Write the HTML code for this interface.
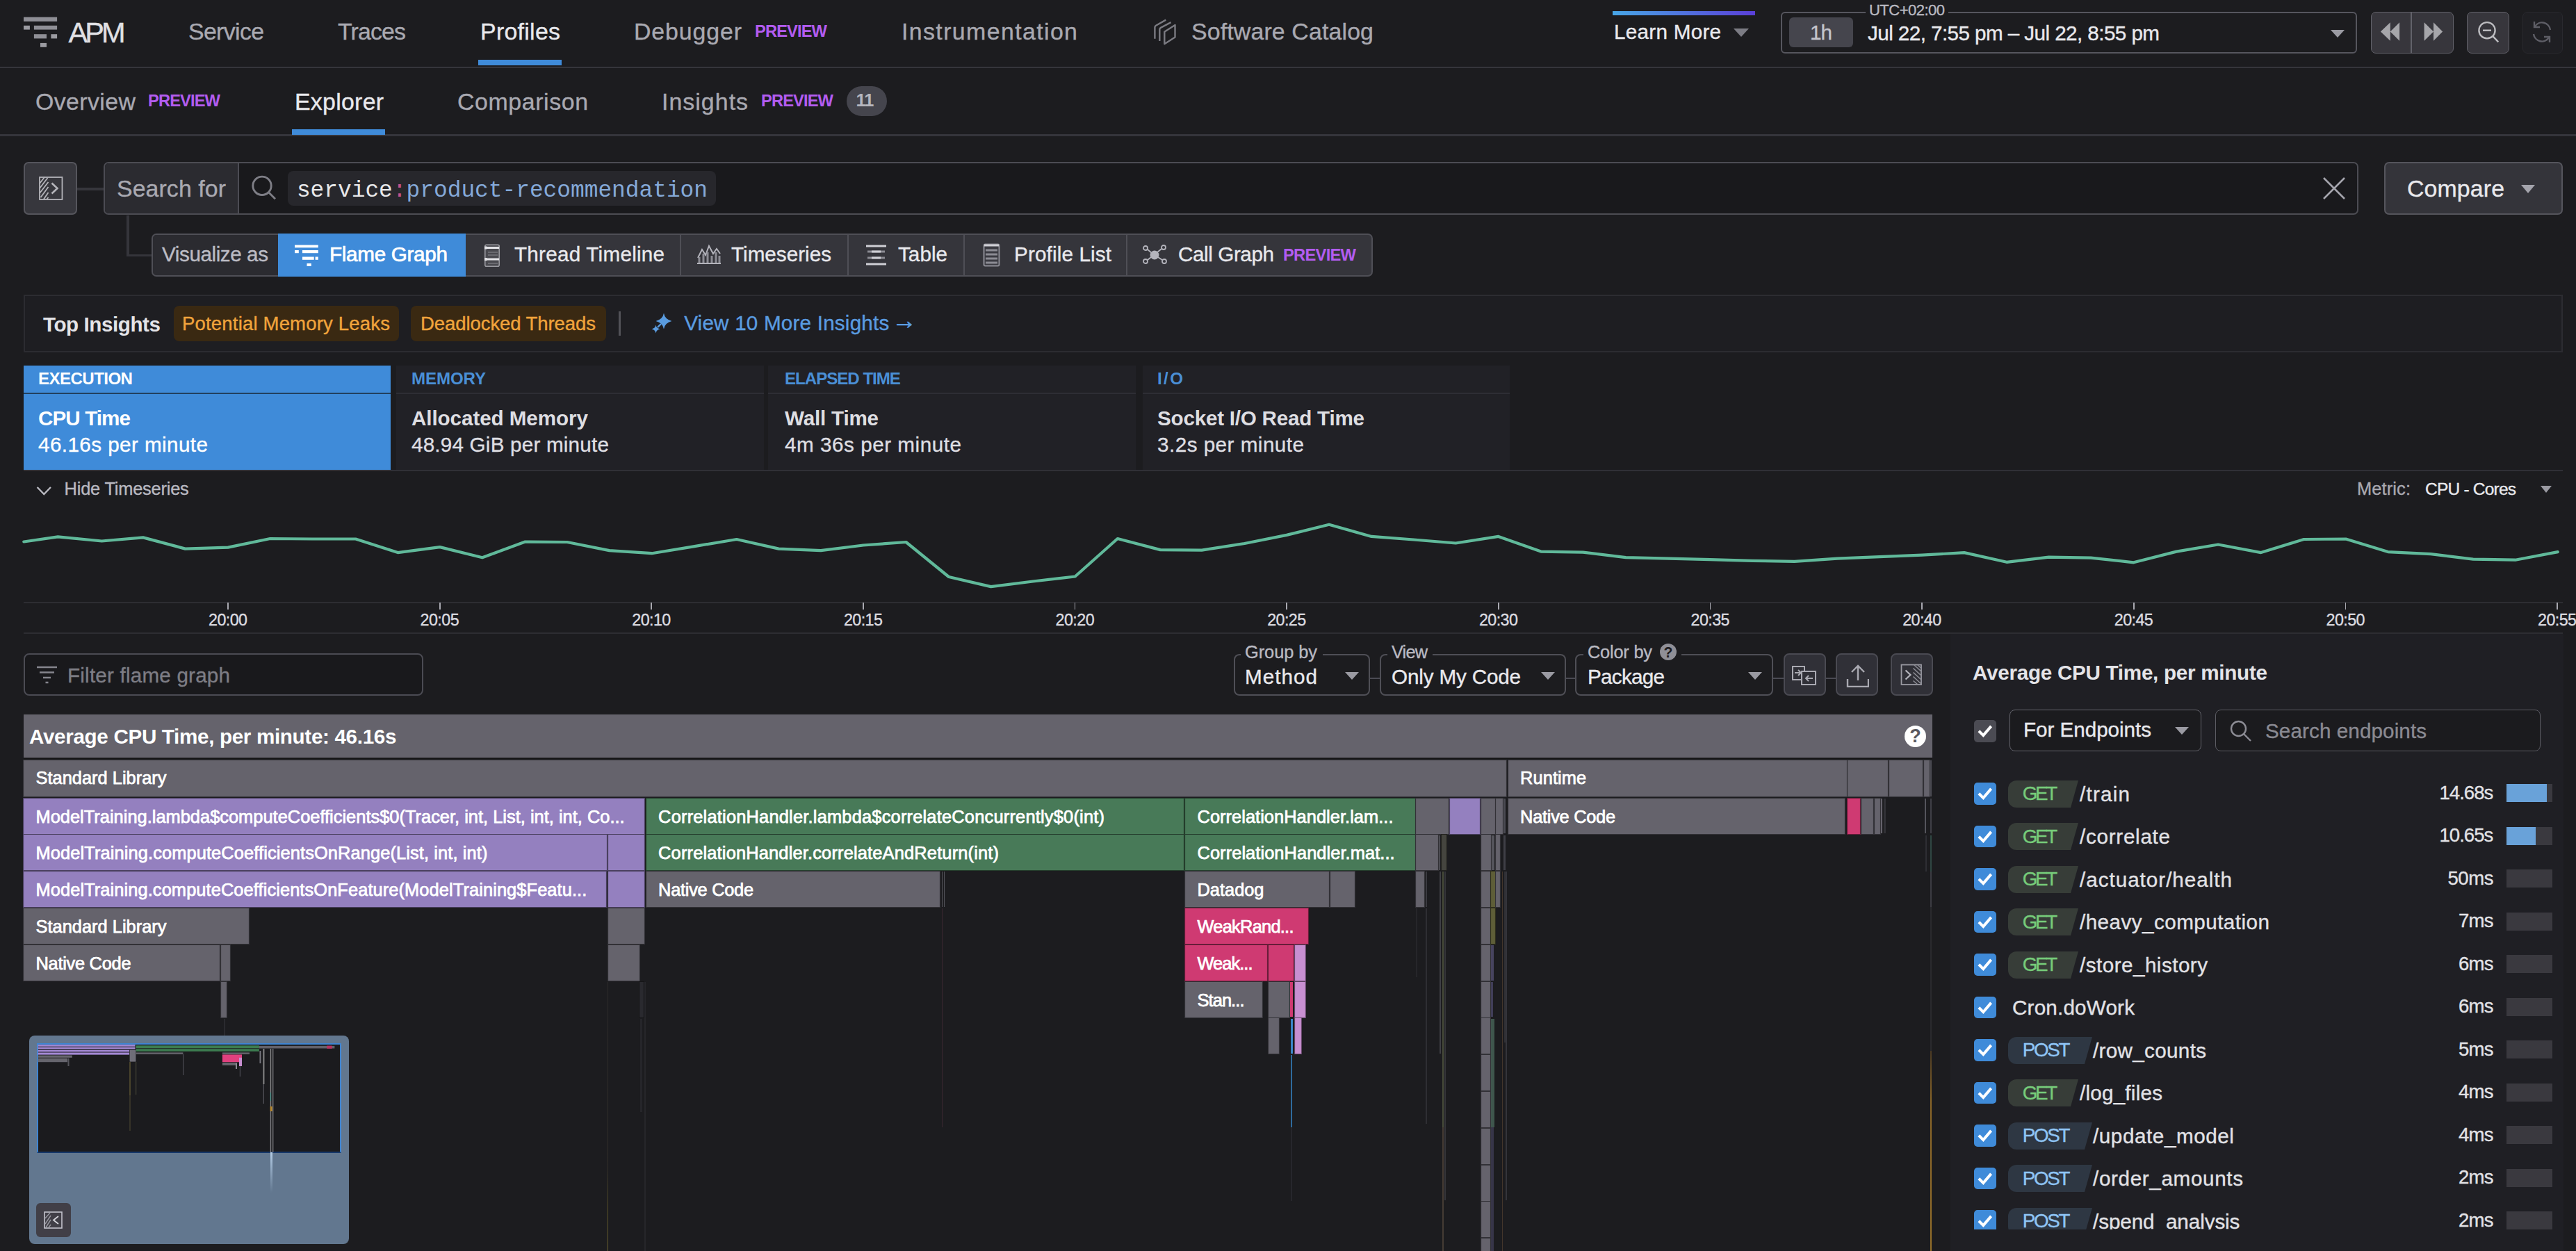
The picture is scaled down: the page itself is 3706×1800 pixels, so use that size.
<!DOCTYPE html>
<html lang="en"><head><meta charset="utf-8"><title>APM Profiles Explorer</title>
<style>
html,body{margin:0;padding:0;background:#1c1c1f;}
body{width:3706px;height:1800px;overflow:hidden;position:relative;font-family:"Liberation Sans",sans-serif;}
.a{position:absolute;}
.t{position:absolute;white-space:pre;line-height:1;}
.m{font-family:"Liberation Mono",monospace;}
.b{font-weight:700;}
</style></head><body>
<div class="a" style="left:0.0px;top:96.0px;width:3706.0px;height:2.2px;background:#35353b;"></div>
<svg class="a" style="left:33.0px;top:24.0px;" width="50.0" height="45.0" viewBox="0 0 50 45"><g fill="#8f8f96"><rect x="1" y="0.6" width="48.1" height="6.2"/><rect x="1" y="12.8" width="8.9" height="5.8" fill="#9b9ba1"/><rect x="15.9" y="12.8" width="33.2" height="5.8"/><rect x="15.9" y="25.2" width="18.1" height="6.2"/><rect x="40.4" y="25.2" width="8.7" height="6.2" fill="#9b9ba1"/><rect x="25" y="37.9" width="9" height="5.9" fill="#9b9ba1"/></g></svg>
<span class="t" style="left:98.4px;top:26.1px;font-size:41.51px;color:#e0e0e4;-webkit-text-stroke:0.35px #e0e0e4;letter-spacing:-3.82px;">APM</span>
<span class="t" style="left:271.0px;top:28.8px;font-size:33.88px;color:#a9a9b1;-webkit-text-stroke:0.35px #a9a9b1;letter-spacing:-0.66px;">Service</span>
<span class="t" style="left:486.0px;top:28.8px;font-size:33.88px;color:#a9a9b1;-webkit-text-stroke:0.35px #a9a9b1;letter-spacing:-0.86px;">Traces</span>
<span class="t" style="left:691.0px;top:28.8px;font-size:33.88px;color:#e9e9ed;-webkit-text-stroke:0.35px #e9e9ed;letter-spacing:0.29px;">Profiles</span>
<div class="a" style="left:688.0px;top:86.0px;width:120.0px;height:8.0px;background:#3f8bd9;"></div>
<span class="t" style="left:912.0px;top:28.8px;font-size:33.88px;color:#a9a9b1;-webkit-text-stroke:0.35px #a9a9b1;letter-spacing:0.89px;">Debugger</span>
<span class="t b" style="left:1086.0px;top:34.3px;font-size:23.72px;color:#b35cf0;letter-spacing:-0.90px;">PREVIEW</span>
<span class="t" style="left:1297.0px;top:28.8px;font-size:33.88px;color:#a9a9b1;-webkit-text-stroke:0.35px #a9a9b1;letter-spacing:1.39px;">Instrumentation</span>
<svg class="a" style="left:1655.0px;top:24.0px;" width="42.0" height="44.0" viewBox="0 0 42 44"><g fill="none" stroke="#7b7b82" stroke-width="2.4" stroke-linejoin="round" stroke-linecap="butt"><path d="M6.4 31.8V15.5Q6.4 13.6 8 12.7L22.3 4.6"/><path d="M13.3 34.9V18.6Q13.3 16.8 14.9 15.9L29.6 8.1"/><path d="M20.3 21.7L35.5 12V29.5L20.3 39.2Z"/></g></svg>
<span class="t" style="left:1714.0px;top:28.8px;font-size:33.88px;color:#a9a9b1;-webkit-text-stroke:0.35px #a9a9b1;letter-spacing:0.14px;">Software Catalog</span>
<div class="a" style="left:2320px;top:16px;width:205px;height:6px;background:linear-gradient(90deg,#47a6e6,#5a3fd8);"></div>
<span class="t" style="left:2322.0px;top:31.1px;font-size:29.65px;color:#e9e9ed;-webkit-text-stroke:0.35px #e9e9ed;letter-spacing:0.27px;">Learn More</span>
<div class="a" style="left:2494px;top:41px;border-left:11px solid transparent;border-right:11px solid transparent;border-top:12px solid #7c7c84;"></div>
<div class="a" style="left:2562.0px;top:17.0px;width:829.0px;height:60.0px;border:2px solid #56565e;box-sizing:border-box;border-radius:6px;"></div>
<div class="a" style="left:2684.0px;top:10.0px;width:119.0px;height:14.0px;background:#1c1c1f;"></div>
<span class="t" style="left:2689.0px;top:3.7px;font-size:22.02px;color:#b9b9c1;-webkit-text-stroke:0.35px #b9b9c1;letter-spacing:-0.53px;">UTC+02:00</span>
<div class="a" style="left:2574.0px;top:25.0px;width:92.0px;height:43.0px;background:#45454d;border-radius:6px;"></div>
<span class="t" style="left:2604.0px;top:31.6px;font-size:29.65px;color:#c4c4cc;-webkit-text-stroke:0.35px #c4c4cc;letter-spacing:-0.98px;">1h</span>
<span class="t" style="left:2687.0px;top:32.6px;font-size:29.65px;color:#e9e9ed;-webkit-text-stroke:0.35px #e9e9ed;letter-spacing:-0.57px;">Jul 22, 7:55 pm – Jul 22, 8:55 pm</span>
<div class="a" style="left:3353px;top:43px;border-left:10px solid transparent;border-right:10px solid transparent;border-top:11px solid #9a9aa2;"></div>
<div class="a" style="left:3410.5px;top:16.5px;width:119.0px;height:60.5px;background:#37363c;border:1.7px solid #62626a;box-sizing:border-box;border-radius:7px;"></div>
<div class="a" style="left:3468.4px;top:17.0px;width:1.6px;height:60.0px;background:#62626a;"></div>
<svg class="a" style="left:3424.0px;top:32.0px;" width="30.0" height="28.0" viewBox="0 0 30 28"><path d="M14.8 0.3V26.8L0.9 13.5Z M28.1 0.3V26.8L14.8 13.5Z" fill="#a6a6aa"/></svg>
<svg class="a" style="left:3487.0px;top:32.0px;" width="30.0" height="28.0" viewBox="0 0 30 28"><path d="M0.6 0.3V26.8L14 13.5Z M14 0.3V26.8L27.1 13.5Z" fill="#a6a6aa"/></svg>
<div class="a" style="left:3549.0px;top:16.5px;width:60.5px;height:60.5px;background:#37363c;border:1.7px solid #62626a;box-sizing:border-box;border-radius:7px;"></div>
<svg class="a" style="left:3563.0px;top:30.0px;" width="34.0" height="34.0" viewBox="0 0 34 34"><g fill="none" stroke="#bcbcc0" stroke-width="2.4"><circle cx="15" cy="13.7" r="11.6"/><path d="M23.4 22.1L31.2 30.3M9 13.7H21"/></g></svg>
<div class="a" style="left:3628.5px;top:16.5px;width:58.5px;height:60.5px;background:#1f1f23;border:1.7px solid #29292e;box-sizing:border-box;border-radius:7px;"></div>
<svg class="a" style="left:3641.0px;top:29.0px;" width="34.0" height="34.0" viewBox="0 0 34 34"><g fill="none" stroke="#5e5e66" stroke-width="2.4" transform="translate(33,0) scale(-1,1)"><path d="M5 14A12 12 0 0 1 27 9M29 20A12 12 0 0 1 7 25"/><path d="M28 2V10H20M6 32V24H14"/></g></svg>
<div class="a" style="left:0.0px;top:193.4px;width:3706.0px;height:2.2px;background:#35353b;"></div>
<span class="t" style="left:51.0px;top:130.0px;font-size:33.88px;color:#a9a9b1;-webkit-text-stroke:0.35px #a9a9b1;letter-spacing:0.40px;">Overview</span>
<span class="t b" style="left:213.0px;top:134.4px;font-size:23.72px;color:#b35cf0;letter-spacing:-0.90px;">PREVIEW</span>
<span class="t" style="left:424.0px;top:130.0px;font-size:33.88px;color:#e9e9ed;-webkit-text-stroke:0.35px #e9e9ed;letter-spacing:0.27px;">Explorer</span>
<div class="a" style="left:420.0px;top:186.0px;width:134.0px;height:8.0px;background:#3f8bd9;"></div>
<span class="t" style="left:658.0px;top:130.0px;font-size:33.88px;color:#a9a9b1;-webkit-text-stroke:0.35px #a9a9b1;letter-spacing:0.60px;">Comparison</span>
<span class="t" style="left:952.0px;top:130.0px;font-size:33.88px;color:#a9a9b1;-webkit-text-stroke:0.35px #a9a9b1;letter-spacing:1.04px;">Insights</span>
<span class="t b" style="left:1095.0px;top:134.4px;font-size:23.72px;color:#b35cf0;letter-spacing:-0.90px;">PREVIEW</span>
<div class="a" style="left:1218.0px;top:124.0px;width:58.0px;height:43.0px;background:#45454d;border-radius:22px;"></div>
<span class="t b" style="left:1231.5px;top:132.2px;font-size:25.41px;color:#b6b6be;letter-spacing:-0.86px;">11</span>
<div class="a" style="left:34.0px;top:232.5px;width:77.3px;height:76.8px;background:#37373d;border:2px solid #55555c;box-sizing:border-box;border-radius:7px;"></div>
<svg class="a" style="left:55.0px;top:253.0px;" width="37.0" height="36.0" viewBox="0 0 37 36"><rect x="2" y="2" width="32.5" height="32" fill="none" stroke="#b4b4ba" stroke-width="1.8"/><path d="M2 11L9 2M2 18L13.5 3M2 25L14.5 9M3.5 31L14.5 16M8 33.5L14.5 24M12.5 33.5L14.5 31" stroke="#b4b4ba" stroke-width="1.8" fill="none"/><path d="M19.5 10.5L27.5 18L19.5 25.5" stroke="#b4b4ba" stroke-width="2.6" fill="none"/></svg>
<div class="a" style="left:111.0px;top:270.3px;width:38.0px;height:3.7px;background:#36363c;"></div>
<div class="a" style="left:149.0px;top:232.5px;width:3244.0px;height:76.8px;background:#19191c;border:2px solid #4c4c53;box-sizing:border-box;border-radius:7px;"></div>
<div class="a" style="left:151.0px;top:234.5px;width:192.0px;height:72.8px;background:#2b2b30;border-radius:5px 0 0 5px;"></div>
<div class="a" style="left:342.0px;top:234.5px;width:2.2px;height:72.8px;background:#4c4c53;"></div>
<span class="t" style="left:168.0px;top:255.0px;font-size:33.88px;color:#a9a9b1;-webkit-text-stroke:0.35px #a9a9b1;letter-spacing:0.08px;">Search for</span>
<svg class="a" style="left:360.0px;top:250.0px;" width="40.0" height="40.0" viewBox="0 0 40 40"><g fill="none" stroke="#7e7e86" stroke-width="2.9"><circle cx="17" cy="17.3" r="13.2"/><path d="M26.5 26.8L36 36.2"/></g></svg>
<div class="a" style="left:414.0px;top:246.0px;width:615.7px;height:50.0px;background:#27272c;border-radius:8px;"></div>
<span class="t m" style="left:426.9px;top:259.4px;font-size:32.85px;color:#e8e8ea;">service</span>
<span class="t m" style="left:564.9px;top:259.4px;font-size:32.85px;color:#c2528c;">:</span>
<span class="t m" style="left:584.6px;top:259.4px;font-size:32.85px;color:#85a9d8;">product-recommendation</span>
<svg class="a" style="left:3340.0px;top:253.0px;" width="36.0" height="36.0" viewBox="0 0 36 36"><path d="M3 3L33 33M33 3L3 33" stroke="#a4a4ac" stroke-width="2.6" fill="none"/></svg>
<div class="a" style="left:3430.0px;top:232.5px;width:257.0px;height:76.8px;background:#34343a;border:2px solid #55555c;box-sizing:border-box;border-radius:7px;"></div>
<span class="t" style="left:3463.0px;top:255.0px;font-size:33.88px;color:#e9e9ed;-webkit-text-stroke:0.35px #e9e9ed;letter-spacing:0.11px;">Compare</span>
<div class="a" style="left:3627px;top:266px;border-left:10.5px solid transparent;border-right:10.5px solid transparent;border-top:12px solid #a4a4ac;"></div>
<div class="a" style="left:182.4px;top:310.0px;width:3.2px;height:59.3px;background:#35353b;"></div>
<div class="a" style="left:182.4px;top:366.2px;width:35.6px;height:3.1px;background:#35353b;"></div>
<div class="a" style="left:218.0px;top:336.0px;width:1757.0px;height:61.5px;background:#35353b;border:2px solid #4f4f56;box-sizing:border-box;border-radius:7px;"></div>
<div class="a" style="left:220.0px;top:338.0px;width:180.0px;height:57.5px;background:#2b2b30;border-radius:5px 0 0 5px;"></div>
<span class="t" style="left:233.0px;top:350.5px;font-size:29.65px;color:#bcbcc4;-webkit-text-stroke:0.35px #bcbcc4;letter-spacing:-0.42px;">Visualize as</span>
<div class="a" style="left:400.0px;top:336.0px;width:269.7px;height:61.5px;background:#3f8bd9;"></div>
<svg class="a" style="left:423.0px;top:351.0px;" width="36.0" height="34.0" viewBox="0 0 36 34"><g fill="#fff"><rect x="1" y="1.5" width="33.8" height="3.8"/><rect x="1" y="9" width="5.8" height="4.2"/><rect x="12" y="9" width="22.8" height="4.2"/><rect x="12" y="18.5" width="16.7" height="4.3"/><rect x="30.6" y="18.5" width="4.2" height="4.3"/><rect x="18.5" y="28" width="6.3" height="4"/></g></svg>
<span class="t" style="left:474.0px;top:350.7px;font-size:29.65px;color:#ffffff;-webkit-text-stroke:0.7px #ffffff;letter-spacing:-0.31px;">Flame Graph</span>
<div class="a" style="left:978.0px;top:338.0px;width:2.0px;height:57.5px;background:#4f4f56;"></div>
<div class="a" style="left:1219.0px;top:338.0px;width:2.0px;height:57.5px;background:#4f4f56;"></div>
<div class="a" style="left:1386.0px;top:338.0px;width:2.0px;height:57.5px;background:#4f4f56;"></div>
<div class="a" style="left:1620.0px;top:338.0px;width:2.0px;height:57.5px;background:#4f4f56;"></div>
<svg class="a" style="left:696.0px;top:350.0px;" width="25.0" height="36.0" viewBox="0 0 25 36"><rect x="1.8" y="2.2" width="20.4" height="31" rx="2" fill="#4a4a50" stroke="#9a9aa0" stroke-width="1.6"/><path d="M4 6.5H22M4 23H22" stroke="#e4e4e8" stroke-width="3.2"/><rect x="1" y="4.5" width="3.5" height="4" fill="#e4e4e8"/><rect x="1" y="21" width="3.5" height="4" fill="#e4e4e8"/><path d="M6 13H20M6 17H20M6 29H20" stroke="#6a6a70" stroke-width="2.2"/></svg>
<span class="t" style="left:740.0px;top:350.5px;font-size:29.65px;color:#e9e9ed;-webkit-text-stroke:0.35px #e9e9ed;letter-spacing:0.25px;">Thread Timeline</span>
<svg class="a" style="left:1002.0px;top:351.0px;" width="36.0" height="30.0" viewBox="0 0 36 30"><g fill="none" stroke="#b4b4bc" stroke-width="2"><path d="M1 28H35"/><path d="M2 20L8 8L13 16L18 3L24 14L29 7L34 14"/><path d="M4 27V19M10 27V14M16 27V12M22 27V17M28 27V12M33 27V17" stroke="#8c8c94" stroke-width="3"/></g></svg>
<span class="t" style="left:1052.0px;top:350.5px;font-size:29.65px;color:#e9e9ed;-webkit-text-stroke:0.35px #e9e9ed;letter-spacing:0.02px;">Timeseries</span>
<svg class="a" style="left:1246.0px;top:352.0px;" width="30.0" height="30.0" viewBox="0 0 30 30"><g stroke="#cfcfd5" stroke-width="3" fill="none"><path d="M0 2H29M0 28H29"/><path d="M2 10H27M2 19H27" stroke="#8c8c94"/><path d="M8 10H21M8 19H21"/></g></svg>
<span class="t" style="left:1292.0px;top:350.5px;font-size:29.65px;color:#e9e9ed;-webkit-text-stroke:0.35px #e9e9ed;letter-spacing:0.04px;">Table</span>
<svg class="a" style="left:1414.0px;top:350.0px;" width="26.0" height="34.0" viewBox="0 0 26 34"><rect x="1.5" y="1.5" width="22" height="31" rx="2" fill="#3b3b42" stroke="#8c8c94" stroke-width="2"/><path d="M2 3H23" stroke="#cfcfd5" stroke-width="3"/><path d="M4 10H21M4 16H21M4 22H21M4 28H21" stroke="#8c8c94" stroke-width="3"/></svg>
<span class="t" style="left:1459.0px;top:350.5px;font-size:29.65px;color:#e9e9ed;-webkit-text-stroke:0.35px #e9e9ed;letter-spacing:0.15px;">Profile List</span>
<svg class="a" style="left:1644.0px;top:352.0px;" width="36.0" height="30.0" viewBox="0 0 36 30"><g fill="none" stroke="#b4b4bc" stroke-width="1.8"><circle cx="17" cy="15" r="5.5" fill="#b4b4bc"/><circle cx="4" cy="5" r="3"/><circle cx="30" cy="4" r="3"/><circle cx="4" cy="24" r="3"/><circle cx="31" cy="24" r="3"/><path d="M7 7L13 12M27 6L21 11M7 22L12 18M28 22L22 18"/></g></svg>
<span class="t" style="left:1695.0px;top:350.5px;font-size:29.65px;color:#e9e9ed;-webkit-text-stroke:0.35px #e9e9ed;letter-spacing:-0.41px;">Call Graph</span>
<span class="t b" style="left:1846.0px;top:355.7px;font-size:23.72px;color:#b35cf0;letter-spacing:-0.73px;">PREVIEW</span>
<div class="a" style="left:34.0px;top:424.0px;width:3653.0px;height:83.0px;background:#1e1e22;border:2px solid #2c2c31;box-sizing:border-box;"></div>
<span class="t b" style="left:62.0px;top:452.1px;font-size:29.65px;color:#e4e4e8;letter-spacing:-0.45px;">Top Insights</span>
<div class="a" style="left:250.0px;top:440.0px;width:324.0px;height:51.0px;background:#3a2912;border-radius:8px;"></div>
<span class="t" style="left:262.0px;top:451.7px;font-size:27.53px;color:#f0a43c;-webkit-text-stroke:0.35px #f0a43c;letter-spacing:0.18px;">Potential Memory Leaks</span>
<div class="a" style="left:591.0px;top:440.0px;width:281.0px;height:51.0px;background:#3a2912;border-radius:8px;"></div>
<span class="t" style="left:605.0px;top:451.7px;font-size:27.53px;color:#f0a43c;-webkit-text-stroke:0.35px #f0a43c;letter-spacing:-0.08px;">Deadlocked Threads</span>
<div class="a" style="left:890.3px;top:448.0px;width:2.7px;height:35.0px;background:#525258;"></div>
<svg class="a" style="left:934.0px;top:449.0px;" width="34.0" height="32.0" viewBox="0 0 34 32"><g fill="#5a9ce0"><path d="M21 1.6Q22.5 10.5 32.4 13Q22.5 15.5 21 24.4Q19.5 15.5 9.6 13Q19.5 10.5 21 1.6Z"/><path d="M9.5 18.6Q10.3 23.4 15.4 24.5Q10.3 25.6 9.5 30.4Q8.7 25.6 3.6 24.5Q8.7 23.4 9.5 18.6Z"/><path d="M12 22L17 17" stroke="#5a9ce0" stroke-width="2.4"/></g></svg>
<span class="t" style="left:984.2px;top:450.1px;font-size:29.65px;color:#5a9ce0;-webkit-text-stroke:0.35px #5a9ce0;letter-spacing:0.20px;">View 10 More Insights</span>
<span class="t" style="left:1283.5px;top:443.2px;font-size:35.00px;color:#5a9ce0;-webkit-text-stroke:0.8px #5a9ce0;">→</span>
<div class="a" style="left:34.0px;top:526.0px;width:528.0px;height:150.0px;background:#3f8bd9;"></div>
<div class="a" style="left:34.0px;top:565.2px;width:528.0px;height:2.2px;background:#22405f;"></div>
<span class="t b" style="left:55.0px;top:532.9px;font-size:24.14px;color:#ffffff;letter-spacing:-0.59px;">EXECUTION</span>
<span class="t b" style="left:55.0px;top:587.1px;font-size:29.65px;color:#ffffff;letter-spacing:-0.92px;">CPU Time</span>
<span class="t" style="left:55.0px;top:625.1px;font-size:29.65px;color:#ffffff;-webkit-text-stroke:0.35px #ffffff;letter-spacing:0.42px;">46.16s per minute</span>
<div class="a" style="left:570.0px;top:526.0px;width:529.0px;height:150.0px;background:#212126;"></div>
<div class="a" style="left:570.0px;top:565.2px;width:529.0px;height:2.0px;background:#2e2e34;"></div>
<span class="t b" style="left:592.0px;top:532.9px;font-size:24.14px;color:#4a8fd6;letter-spacing:-0.13px;">MEMORY</span>
<span class="t b" style="left:592.0px;top:587.1px;font-size:29.65px;color:#dedee2;letter-spacing:-0.09px;">Allocated Memory</span>
<span class="t" style="left:592.0px;top:625.1px;font-size:29.65px;color:#dedee2;-webkit-text-stroke:0.35px #dedee2;letter-spacing:0.20px;">48.94 GiB per minute</span>
<div class="a" style="left:1105.0px;top:526.0px;width:529.0px;height:150.0px;background:#212126;"></div>
<div class="a" style="left:1105.0px;top:565.2px;width:529.0px;height:2.0px;background:#2e2e34;"></div>
<span class="t b" style="left:1129.0px;top:532.9px;font-size:24.14px;color:#4a8fd6;letter-spacing:-1.03px;">ELAPSED TIME</span>
<span class="t b" style="left:1129.0px;top:587.1px;font-size:29.65px;color:#dedee2;letter-spacing:-0.21px;">Wall Time</span>
<span class="t" style="left:1129.0px;top:625.1px;font-size:29.65px;color:#dedee2;-webkit-text-stroke:0.35px #dedee2;letter-spacing:0.53px;">4m 36s per minute</span>
<div class="a" style="left:1644.0px;top:526.0px;width:528.0px;height:150.0px;background:#212126;"></div>
<div class="a" style="left:1644.0px;top:565.2px;width:528.0px;height:2.0px;background:#2e2e34;"></div>
<span class="t b" style="left:1665.0px;top:532.9px;font-size:24.14px;color:#4a8fd6;letter-spacing:2.41px;">I/O</span>
<span class="t b" style="left:1665.0px;top:587.1px;font-size:29.65px;color:#dedee2;letter-spacing:-0.24px;">Socket I/O Read Time</span>
<span class="t" style="left:1665.0px;top:625.1px;font-size:29.65px;color:#dedee2;-webkit-text-stroke:0.35px #dedee2;letter-spacing:0.48px;">3.2s per minute</span>
<div class="a" style="left:34.0px;top:676.0px;width:3653.0px;height:2.0px;background:#303036;"></div>
<svg class="a" style="left:52.0px;top:697.5px;" width="23.0" height="16.0" viewBox="0 0 23 16"><path d="M1.6 3L11.3 13L21 3" fill="none" stroke="#b9b9c1" stroke-width="2.4"/></svg>
<span class="t" style="left:92.6px;top:690.8px;font-size:25.41px;color:#b9b9c1;-webkit-text-stroke:0.35px #b9b9c1;letter-spacing:-0.21px;">Hide Timeseries</span>
<span class="t" style="left:3391.0px;top:691.2px;font-size:25.41px;color:#a9a9b1;-webkit-text-stroke:0.35px #a9a9b1;letter-spacing:0.13px;">Metric:</span>
<span class="t" style="left:3489.0px;top:691.7px;font-size:24.56px;color:#e9e9ed;-webkit-text-stroke:0.35px #e9e9ed;letter-spacing:-0.81px;">CPU - Cores</span>
<div class="a" style="left:3655px;top:699px;border-left:8.5px solid transparent;border-right:8.5px solid transparent;border-top:10px solid #9a9aa2;"></div>
<svg class="a" style="left:0.0px;top:690.0px;" width="3706.0" height="200.0" viewBox="0 690 3706 200"><path d="M34.3 779.5 L83.3 772.4 L146.4 778.5 L205.9 773.4 L266.5 789.6 L328.0 787.6 L388.6 775.0 L449.1 775.5 L511.7 775.5 L572.3 795.1 L632.8 787.1 L693.9 802.2 L755.5 779.5 L816.0 780.0 L876.6 792.1 L937.7 796.2 L999.2 786.1 L1059.8 776.0 L1120.3 789.6 L1180.9 792.1 L1242.0 784.5 L1241.9 784.5 L1303.5 780.0 L1365.0 830.0 L1425.6 844.1 L1486.1 836.5 L1546.7 829.5 L1607.8 775.0 L1669.3 791.1 L1728.9 791.6 L1790.5 782.0 L1851.0 769.9 L1912.1 754.8 L1973.1 771.9 L2033.7 776.5 L2094.3 781.5 L2155.8 771.9 L2216.9 793.6 L2277.4 794.6 L2339.0 802.2 L2401.1 803.7 L2460.5 805.2 L2521.1 806.8 L2581.6 807.8 L2643.2 803.7 L2703.7 801.2 L2765.3 798.7 L2825.9 795.1 L2886.9 808.8 L2947.5 801.7 L3008.1 802.7 L3069.6 809.3 L3131.2 793.6 L3191.2 783.5 L3252.8 795.1 L3314.4 776.0 L3374.9 775.5 L3435.5 794.1 L3497.1 797.2 L3558.1 804.7 L3618.7 805.7 L3679.8 794.1" fill="none" stroke="#60b99a" stroke-width="4.2" stroke-linejoin="round" stroke-linecap="round"/></svg>
<div class="a" style="left:34.0px;top:866.0px;width:3653.0px;height:2.0px;background:#2d2d32;"></div>
<div class="a" style="left:34.0px;top:910.0px;width:3653.0px;height:2.0px;background:#2d2d32;"></div>
<div class="a" style="left:327.1px;top:867.0px;width:1.8px;height:10.0px;background:#a9a9b1;"></div>
<span class="t" style="left:300.0px;top:881.3px;font-size:23.29px;color:#dcdce0;-webkit-text-stroke:0.35px #dcdce0;letter-spacing:-0.57px;">20:00</span>
<div class="a" style="left:631.8px;top:867.0px;width:1.8px;height:10.0px;background:#a9a9b1;"></div>
<span class="t" style="left:604.6px;top:881.3px;font-size:23.29px;color:#dcdce0;-webkit-text-stroke:0.35px #dcdce0;letter-spacing:-0.57px;">20:05</span>
<div class="a" style="left:936.4px;top:867.0px;width:1.8px;height:10.0px;background:#a9a9b1;"></div>
<span class="t" style="left:909.3px;top:881.3px;font-size:23.29px;color:#dcdce0;-webkit-text-stroke:0.35px #dcdce0;letter-spacing:-0.57px;">20:10</span>
<div class="a" style="left:1241.0px;top:867.0px;width:1.8px;height:10.0px;background:#a9a9b1;"></div>
<span class="t" style="left:1213.9px;top:881.3px;font-size:23.29px;color:#dcdce0;-webkit-text-stroke:0.35px #dcdce0;letter-spacing:-0.57px;">20:15</span>
<div class="a" style="left:1545.7px;top:867.0px;width:1.8px;height:10.0px;background:#a9a9b1;"></div>
<span class="t" style="left:1518.6px;top:881.3px;font-size:23.29px;color:#dcdce0;-webkit-text-stroke:0.35px #dcdce0;letter-spacing:-0.57px;">20:20</span>
<div class="a" style="left:1850.3px;top:867.0px;width:1.8px;height:10.0px;background:#a9a9b1;"></div>
<span class="t" style="left:1823.2px;top:881.3px;font-size:23.29px;color:#dcdce0;-webkit-text-stroke:0.35px #dcdce0;letter-spacing:-0.57px;">20:25</span>
<div class="a" style="left:2155.0px;top:867.0px;width:1.8px;height:10.0px;background:#a9a9b1;"></div>
<span class="t" style="left:2127.9px;top:881.3px;font-size:23.29px;color:#dcdce0;-webkit-text-stroke:0.35px #dcdce0;letter-spacing:-0.57px;">20:30</span>
<div class="a" style="left:2459.6px;top:867.0px;width:1.8px;height:10.0px;background:#a9a9b1;"></div>
<span class="t" style="left:2432.5px;top:881.3px;font-size:23.29px;color:#dcdce0;-webkit-text-stroke:0.35px #dcdce0;letter-spacing:-0.57px;">20:35</span>
<div class="a" style="left:2764.3px;top:867.0px;width:1.8px;height:10.0px;background:#a9a9b1;"></div>
<span class="t" style="left:2737.2px;top:881.3px;font-size:23.29px;color:#dcdce0;-webkit-text-stroke:0.35px #dcdce0;letter-spacing:-0.57px;">20:40</span>
<div class="a" style="left:3068.9px;top:867.0px;width:1.8px;height:10.0px;background:#a9a9b1;"></div>
<span class="t" style="left:3041.8px;top:881.3px;font-size:23.29px;color:#dcdce0;-webkit-text-stroke:0.35px #dcdce0;letter-spacing:-0.57px;">20:45</span>
<div class="a" style="left:3373.6px;top:867.0px;width:1.8px;height:10.0px;background:#a9a9b1;"></div>
<span class="t" style="left:3346.5px;top:881.3px;font-size:23.29px;color:#dcdce0;-webkit-text-stroke:0.35px #dcdce0;letter-spacing:-0.57px;">20:50</span>
<div class="a" style="left:3678.2px;top:867.0px;width:1.8px;height:10.0px;background:#a9a9b1;"></div>
<span class="t" style="left:3651.0px;top:881.3px;font-size:23.29px;color:#dcdce0;-webkit-text-stroke:0.35px #dcdce0;letter-spacing:-0.57px;">20:55</span>
<div class="a" style="left:34.0px;top:940.0px;width:575.0px;height:61.0px;background:#19191c;border:2px solid #4b4b53;box-sizing:border-box;border-radius:8px;"></div>
<svg class="a" style="left:52.0px;top:958.0px;" width="32.0" height="26.0" viewBox="0 0 32 26"><path d="M1 2H30M5 9.5H26M10 17H21M13.5 24H17.5" stroke="#85858d" stroke-width="2.4" fill="none"/></svg>
<span class="t" style="left:97.0px;top:956.6px;font-size:29.65px;color:#7d7d85;-webkit-text-stroke:0.35px #7d7d85;letter-spacing:0.20px;">Filter flame graph</span>
<div class="a" style="left:1775.0px;top:941.3px;width:196.0px;height:60.2px;border:2px solid #4f4f56;box-sizing:border-box;border-radius:8px;"></div>
<div class="a" style="left:1785.0px;top:930.0px;width:118.0px;height:16.0px;background:#1c1c1f;"></div>
<span class="t" style="left:1791.0px;top:925.5px;font-size:25.41px;color:#b9b9c1;-webkit-text-stroke:0.35px #b9b9c1;letter-spacing:-0.07px;">Group by</span>
<span class="t" style="left:1791.0px;top:958.6px;font-size:29.65px;color:#e9e9ed;-webkit-text-stroke:0.35px #e9e9ed;letter-spacing:1.02px;">Method</span>
<div class="a" style="left:1935px;top:967px;border-left:10px solid transparent;border-right:10px solid transparent;border-top:11px solid #9a9aa2;"></div>
<div class="a" style="left:1971.0px;top:975.0px;width:14.0px;height:2.0px;background:#4b4b53;"></div>
<div class="a" style="left:1985.0px;top:941.3px;width:268.0px;height:60.2px;border:2px solid #4f4f56;box-sizing:border-box;border-radius:8px;"></div>
<div class="a" style="left:1996.0px;top:930.0px;width:65.0px;height:16.0px;background:#1c1c1f;"></div>
<span class="t" style="left:2002.0px;top:925.5px;font-size:25.41px;color:#b9b9c1;-webkit-text-stroke:0.35px #b9b9c1;letter-spacing:-0.87px;">View</span>
<span class="t" style="left:2002.0px;top:958.6px;font-size:29.65px;color:#e9e9ed;-webkit-text-stroke:0.35px #e9e9ed;letter-spacing:-0.16px;">Only My Code</span>
<div class="a" style="left:2217px;top:967px;border-left:10px solid transparent;border-right:10px solid transparent;border-top:11px solid #9a9aa2;"></div>
<div class="a" style="left:2253.0px;top:975.0px;width:13.0px;height:2.0px;background:#4b4b53;"></div>
<div class="a" style="left:2266.0px;top:941.3px;width:285.0px;height:60.2px;border:2px solid #4f4f56;box-sizing:border-box;border-radius:8px;"></div>
<div class="a" style="left:2278.0px;top:925.0px;width:141.0px;height:21.0px;background:#1c1c1f;"></div>
<span class="t" style="left:2284.0px;top:925.5px;font-size:25.41px;color:#b9b9c1;-webkit-text-stroke:0.35px #b9b9c1;letter-spacing:-0.23px;">Color by</span>
<div class="a" style="left:2388.0px;top:926.0px;width:24.0px;height:24.0px;background:#8f8f97;border-radius:12px;"></div>
<span class="t b" style="left:2393.5px;top:927.9px;font-size:21.18px;color:#1c1c1f;letter-spacing:-0.94px;">?</span>
<span class="t" style="left:2284.0px;top:958.6px;font-size:29.65px;color:#e9e9ed;-webkit-text-stroke:0.35px #e9e9ed;letter-spacing:-0.73px;">Package</span>
<div class="a" style="left:2515px;top:967px;border-left:10px solid transparent;border-right:10px solid transparent;border-top:11px solid #9a9aa2;"></div>
<div class="a" style="left:2551.0px;top:975.0px;width:15.0px;height:2.0px;background:#4b4b53;"></div>
<div class="a" style="left:2627.0px;top:975.0px;width:14.0px;height:2.0px;background:#4b4b53;"></div>
<div class="a" style="left:2566.0px;top:940.0px;width:61.0px;height:61.0px;background:#303037;border:2px solid #4a4a52;box-sizing:border-box;border-radius:8px;"></div>
<div class="a" style="left:2641.0px;top:940.0px;width:61.0px;height:61.0px;background:#303037;border:2px solid #4a4a52;box-sizing:border-box;border-radius:8px;"></div>
<div class="a" style="left:2720.0px;top:940.0px;width:61.0px;height:61.0px;background:#303037;border:2px solid #4a4a52;box-sizing:border-box;border-radius:8px;"></div>
<svg class="a" style="left:2578.0px;top:956.0px;" width="38.0" height="34.0" viewBox="0 0 38 34"><g fill="none" stroke="#a9a9b1" stroke-width="2"><rect x="1" y="3" width="17" height="19" fill="#303037"/><rect x="14" y="10" width="20" height="19" fill="#303037"/><path d="M4 12H13M9 8L13 12L9 16M30 20H20M24 16L20 20L24 24"/></g></svg>
<svg class="a" style="left:2655.0px;top:955.0px;" width="34.0" height="34.0" viewBox="0 0 34 34"><g fill="none" stroke="#a9a9b1" stroke-width="2.4"><path d="M18 24V3M9 12L18 3L27 12M3 22V33H33V22"/></g></svg>
<svg class="a" style="left:2734.0px;top:955.0px;" width="32.0" height="32.0" viewBox="0 0 32 32"><rect x="1.5" y="1.5" width="28.5" height="28.5" fill="none" stroke="#9a9aa2" stroke-width="1.8"/><path d="M20 2L30 11M18.5 6.5L30 17M18.5 12.5L30 23M18.5 18.5L30 29M18.5 24.5L25 30M25 2L30 6.5" stroke="#8c8c94" stroke-width="1.6" fill="none"/><path d="M7.5 9.5L14.5 16L7.5 22.5" stroke="#b4b4bc" stroke-width="2.2" fill="none"/></svg>
<div class="a" style="left:34.0px;top:1028.0px;width:2746.0px;height:63.6px;background:#65636c;box-shadow:inset 0 -1.8px 0 0 rgba(0,0,0,.8);"></div>
<span class="t b" style="left:42.0px;top:1044.6px;font-size:29.65px;color:#ffffff;letter-spacing:-0.34px;">Average CPU Time, per minute: 46.16s</span>
<div class="a" style="left:2740.0px;top:1044.0px;width:31.0px;height:31.0px;background:#ffffff;border-radius:16px;"></div>
<span class="t b" style="left:2747.2px;top:1046.4px;font-size:27.00px;color:#5a5960;letter-spacing:-1.50px;">?</span>
<div class="a" style="left:32.9px;top:1092.8px;width:2135.6px;height:54.6px;background:#65636c;box-shadow:inset 0 0 0 1.1px rgba(0,0,0,.5);"></div>
<span class="t" style="left:51.5px;top:1106.7px;font-size:25.41px;color:#ffffff;-webkit-text-stroke:0.75px #ffffff;letter-spacing:0.01px;">Standard Library</span>
<div class="a" style="left:2168.5px;top:1092.8px;width:489.1px;height:54.6px;background:#65636c;box-shadow:inset 0 0 0 1.1px rgba(0,0,0,.5);"></div>
<span class="t" style="left:2187.1px;top:1106.7px;font-size:25.41px;color:#ffffff;-webkit-text-stroke:0.75px #ffffff;letter-spacing:0.07px;">Runtime</span>
<div class="a" style="left:2656.9px;top:1092.8px;width:60.2px;height:54.6px;background:#65636c;box-shadow:inset 0 0 0 1.1px rgba(0,0,0,.5);"></div>
<div class="a" style="left:2716.9px;top:1092.8px;width:50.2px;height:54.6px;background:#65636c;box-shadow:inset 0 0 0 1.1px rgba(0,0,0,.5);"></div>
<div class="a" style="left:2766.9px;top:1092.8px;width:10.2px;height:54.6px;background:#65636c;box-shadow:inset 0 0 0 1.1px rgba(0,0,0,.5);"></div>
<div class="a" style="left:2777.3px;top:1093.9px;width:2.0px;height:52.4px;background:#4a4a52;"></div>
<div class="a" style="left:32.9px;top:1147.6px;width:895.5px;height:53.0px;background:#9480bf;box-shadow:inset 0 0 0 1.1px rgba(0,0,0,.5);"></div>
<span class="t" style="left:51.5px;top:1162.6px;font-size:25.41px;color:#ffffff;-webkit-text-stroke:0.75px #ffffff;letter-spacing:0.01px;">ModelTraining.lambda$computeCoefficients$0(Tracer, int, List, int, int, Co...</span>
<div class="a" style="left:928.5px;top:1147.6px;width:775.3px;height:53.0px;background:#487a58;box-shadow:inset 0 0 0 1.1px rgba(0,0,0,.5);"></div>
<span class="t" style="left:947.1px;top:1162.6px;font-size:25.41px;color:#ffffff;-webkit-text-stroke:0.75px #ffffff;letter-spacing:0.20px;">CorrelationHandler.lambda$correlateConcurrently$0(int)</span>
<div class="a" style="left:1703.9px;top:1147.6px;width:333.2px;height:53.0px;background:#487a58;box-shadow:inset 0 0 0 1.1px rgba(0,0,0,.5);"></div>
<span class="t" style="left:1722.5px;top:1162.6px;font-size:25.41px;color:#ffffff;-webkit-text-stroke:0.75px #ffffff;letter-spacing:0.04px;">CorrelationHandler.lam...</span>
<div class="a" style="left:2036.4px;top:1147.6px;width:49.1px;height:53.0px;background:#65636c;box-shadow:inset 0 0 0 1.1px rgba(0,0,0,.5);"></div>
<div class="a" style="left:2084.9px;top:1147.6px;width:45.6px;height:53.0px;background:#9480bf;box-shadow:inset 0 0 0 1.1px rgba(0,0,0,.5);"></div>
<div class="a" style="left:2129.9px;top:1147.6px;width:22.0px;height:53.0px;background:#65636c;box-shadow:inset 0 0 0 1.1px rgba(0,0,0,.5);"></div>
<div class="a" style="left:2151.2px;top:1147.6px;width:11.8px;height:53.0px;background:#65636c;box-shadow:inset 0 0 0 1.1px rgba(0,0,0,.5);"></div>
<div class="a" style="left:2162.8px;top:1148.7px;width:3.5px;height:50.8px;background:#4a4a52;"></div>
<div class="a" style="left:2168.5px;top:1147.6px;width:486.6px;height:53.0px;background:#65636c;box-shadow:inset 0 0 0 1.1px rgba(0,0,0,.5);"></div>
<span class="t" style="left:2187.1px;top:1162.6px;font-size:25.41px;color:#ffffff;-webkit-text-stroke:0.75px #ffffff;letter-spacing:-0.28px;">Native Code</span>
<div class="a" style="left:2656.9px;top:1147.6px;width:20.2px;height:53.0px;background:#cf3a72;box-shadow:inset 0 0 0 1.1px rgba(0,0,0,.5);"></div>
<div class="a" style="left:2676.9px;top:1147.6px;width:19.2px;height:53.0px;background:#65636c;box-shadow:inset 0 0 0 1.1px rgba(0,0,0,.5);"></div>
<div class="a" style="left:2695.9px;top:1147.6px;width:10.2px;height:53.0px;background:#65636c;box-shadow:inset 0 0 0 1.1px rgba(0,0,0,.5);"></div>
<div class="a" style="left:2706.3px;top:1148.7px;width:1.7px;height:50.8px;background:#65636c;"></div>
<div class="a" style="left:2710.0px;top:1148.7px;width:3.0px;height:50.8px;background:#303035;"></div>
<div class="a" style="left:2769.0px;top:1148.7px;width:2.0px;height:50.8px;background:#55555c;"></div>
<div class="a" style="left:2777.3px;top:1148.7px;width:2.0px;height:50.8px;background:#3f3f46;"></div>
<div class="a" style="left:32.9px;top:1200.4px;width:841.2px;height:53.0px;background:#9480bf;box-shadow:inset 0 0 0 1.1px rgba(0,0,0,.5);"></div>
<span class="t" style="left:51.5px;top:1215.4px;font-size:25.41px;color:#ffffff;-webkit-text-stroke:0.75px #ffffff;letter-spacing:0.11px;">ModelTraining.computeCoefficientsOnRange(List, int, int)</span>
<div class="a" style="left:874.1px;top:1200.4px;width:54.3px;height:53.0px;background:#9480bf;box-shadow:inset 0 0 0 1.1px rgba(0,0,0,.5);"></div>
<div class="a" style="left:928.5px;top:1200.4px;width:775.3px;height:53.0px;background:#487a58;box-shadow:inset 0 0 0 1.1px rgba(0,0,0,.5);"></div>
<span class="t" style="left:947.1px;top:1215.4px;font-size:25.41px;color:#ffffff;-webkit-text-stroke:0.75px #ffffff;letter-spacing:0.17px;">CorrelationHandler.correlateAndReturn(int)</span>
<div class="a" style="left:1703.9px;top:1200.4px;width:333.2px;height:53.0px;background:#487a58;box-shadow:inset 0 0 0 1.1px rgba(0,0,0,.5);"></div>
<span class="t" style="left:1722.5px;top:1215.4px;font-size:25.41px;color:#ffffff;-webkit-text-stroke:0.75px #ffffff;letter-spacing:0.07px;">CorrelationHandler.mat...</span>
<div class="a" style="left:2036.4px;top:1200.4px;width:33.3px;height:53.0px;background:#65636c;box-shadow:inset 0 0 0 1.1px rgba(0,0,0,.5);"></div>
<div class="a" style="left:2069.6px;top:1201.5px;width:2.9px;height:50.8px;background:#4b4b50;"></div>
<div class="a" style="left:2072.9px;top:1200.4px;width:8.7px;height:53.0px;background:#45453f;box-shadow:inset 0 0 0 1.1px rgba(0,0,0,.5);"></div>
<div class="a" style="left:2129.9px;top:1200.4px;width:16.2px;height:53.0px;background:#65636c;box-shadow:inset 0 0 0 1.1px rgba(0,0,0,.5);"></div>
<div class="a" style="left:2146.3px;top:1201.5px;width:4.2px;height:50.8px;background:#55555c;"></div>
<div class="a" style="left:2151.2px;top:1200.4px;width:8.1px;height:53.0px;background:#65636c;box-shadow:inset 0 0 0 1.1px rgba(0,0,0,.5);"></div>
<div class="a" style="left:2162.8px;top:1201.5px;width:3.5px;height:50.8px;background:#3f3f46;"></div>
<div class="a" style="left:32.9px;top:1253.2px;width:840.0px;height:53.0px;background:#9480bf;box-shadow:inset 0 0 0 1.1px rgba(0,0,0,.5);"></div>
<span class="t" style="left:51.5px;top:1268.2px;font-size:25.41px;color:#ffffff;-webkit-text-stroke:0.75px #ffffff;letter-spacing:0.09px;">ModelTraining.computeCoefficientsOnFeature(ModelTraining$Featu...</span>
<div class="a" style="left:873.7px;top:1253.2px;width:54.7px;height:53.0px;background:#9480bf;box-shadow:inset 0 0 0 1.1px rgba(0,0,0,.5);"></div>
<div class="a" style="left:928.5px;top:1253.2px;width:424.9px;height:53.0px;background:#65636c;box-shadow:inset 0 0 0 1.1px rgba(0,0,0,.5);"></div>
<span class="t" style="left:947.1px;top:1268.2px;font-size:25.41px;color:#ffffff;-webkit-text-stroke:0.75px #ffffff;letter-spacing:-0.28px;">Native Code</span>
<div class="a" style="left:1354.5px;top:1254.3px;width:1.5px;height:50.8px;background:#55555c;"></div>
<div class="a" style="left:1357.7px;top:1254.3px;width:1.0px;height:50.8px;background:#55555c;"></div>
<div class="a" style="left:1703.9px;top:1253.2px;width:209.0px;height:53.0px;background:#65636c;box-shadow:inset 0 0 0 1.1px rgba(0,0,0,.5);"></div>
<span class="t" style="left:1722.5px;top:1268.2px;font-size:25.41px;color:#ffffff;-webkit-text-stroke:0.75px #ffffff;letter-spacing:-0.01px;">Datadog</span>
<div class="a" style="left:1912.9px;top:1253.2px;width:36.9px;height:53.0px;background:#65636c;box-shadow:inset 0 0 0 1.1px rgba(0,0,0,.5);"></div>
<div class="a" style="left:2036.4px;top:1253.2px;width:14.1px;height:53.0px;background:#65636c;box-shadow:inset 0 0 0 1.1px rgba(0,0,0,.5);"></div>
<div class="a" style="left:2050.5px;top:1254.3px;width:2.2px;height:50.8px;background:#3a3a40;"></div>
<div class="a" style="left:2129.9px;top:1253.2px;width:15.4px;height:53.0px;background:#65636c;box-shadow:inset 0 0 0 1.1px rgba(0,0,0,.5);"></div>
<div class="a" style="left:2143.9px;top:1253.2px;width:8.8px;height:53.0px;background:#5e5e38;box-shadow:inset 0 0 0 1.1px rgba(0,0,0,.5);"></div>
<div class="a" style="left:2151.2px;top:1253.2px;width:7.4px;height:53.0px;background:#65636c;box-shadow:inset 0 0 0 1.1px rgba(0,0,0,.5);"></div>
<div class="a" style="left:32.9px;top:1306.0px;width:325.9px;height:53.0px;background:#65636c;box-shadow:inset 0 0 0 1.1px rgba(0,0,0,.5);"></div>
<span class="t" style="left:51.5px;top:1321.0px;font-size:25.41px;color:#ffffff;-webkit-text-stroke:0.75px #ffffff;letter-spacing:0.01px;">Standard Library</span>
<div class="a" style="left:874.1px;top:1306.0px;width:54.3px;height:53.0px;background:#65636c;box-shadow:inset 0 0 0 1.1px rgba(0,0,0,.5);"></div>
<div class="a" style="left:1703.9px;top:1306.0px;width:178.8px;height:53.0px;background:#cf3a72;box-shadow:inset 0 0 0 1.1px rgba(0,0,0,.5);"></div>
<span class="t" style="left:1722.5px;top:1321.0px;font-size:25.41px;color:#ffffff;-webkit-text-stroke:0.75px #ffffff;letter-spacing:-0.74px;">WeakRand...</span>
<div class="a" style="left:2129.9px;top:1306.0px;width:15.4px;height:53.0px;background:#65636c;box-shadow:inset 0 0 0 1.1px rgba(0,0,0,.5);"></div>
<div class="a" style="left:2143.9px;top:1306.0px;width:7.7px;height:53.0px;background:#5e5e38;box-shadow:inset 0 0 0 1.1px rgba(0,0,0,.5);"></div>
<div class="a" style="left:32.9px;top:1358.8px;width:283.9px;height:53.0px;background:#65636c;box-shadow:inset 0 0 0 1.1px rgba(0,0,0,.5);"></div>
<span class="t" style="left:51.5px;top:1373.8px;font-size:25.41px;color:#ffffff;-webkit-text-stroke:0.75px #ffffff;letter-spacing:-0.28px;">Native Code</span>
<div class="a" style="left:316.9px;top:1358.8px;width:15.0px;height:53.0px;background:#65636c;box-shadow:inset 0 0 0 1.1px rgba(0,0,0,.5);"></div>
<div class="a" style="left:874.1px;top:1358.8px;width:47.0px;height:53.0px;background:#65636c;box-shadow:inset 0 0 0 1.1px rgba(0,0,0,.5);"></div>
<div class="a" style="left:1703.9px;top:1358.8px;width:119.8px;height:53.0px;background:#cf3a72;box-shadow:inset 0 0 0 1.1px rgba(0,0,0,.5);"></div>
<span class="t" style="left:1722.5px;top:1373.8px;font-size:25.41px;color:#ffffff;-webkit-text-stroke:0.75px #ffffff;letter-spacing:-0.95px;">Weak...</span>
<div class="a" style="left:1823.7px;top:1358.8px;width:38.4px;height:53.0px;background:#cf3a72;box-shadow:inset 0 0 0 1.1px rgba(0,0,0,.5);"></div>
<div class="a" style="left:1861.7px;top:1358.8px;width:16.9px;height:53.0px;background:#c88fd1;box-shadow:inset 0 0 0 1.1px rgba(0,0,0,.5);"></div>
<div class="a" style="left:2129.9px;top:1358.8px;width:15.4px;height:53.0px;background:#65636c;box-shadow:inset 0 0 0 1.1px rgba(0,0,0,.5);"></div>
<div class="a" style="left:2145.0px;top:1359.9px;width:3.5px;height:50.8px;background:#47445f;"></div>
<div class="a" style="left:316.9px;top:1411.6px;width:10.4px;height:53.0px;background:#65636c;box-shadow:inset 0 0 0 1.1px rgba(0,0,0,.5);"></div>
<div class="a" style="left:919.4px;top:1411.6px;width:7.2px;height:53.0px;background:#2a2a2f;box-shadow:inset 0 0 0 1.1px rgba(0,0,0,.5);"></div>
<div class="a" style="left:1703.9px;top:1411.6px;width:113.2px;height:53.0px;background:#65636c;box-shadow:inset 0 0 0 1.1px rgba(0,0,0,.5);"></div>
<span class="t" style="left:1722.5px;top:1426.6px;font-size:25.41px;color:#ffffff;-webkit-text-stroke:0.75px #ffffff;letter-spacing:-0.91px;">Stan...</span>
<div class="a" style="left:1823.7px;top:1411.6px;width:32.4px;height:53.0px;background:#65636c;box-shadow:inset 0 0 0 1.1px rgba(0,0,0,.5);"></div>
<div class="a" style="left:1855.9px;top:1412.7px;width:3.7px;height:50.8px;background:#cf3a72;"></div>
<div class="a" style="left:1861.7px;top:1411.6px;width:16.9px;height:53.0px;background:#c88fd1;box-shadow:inset 0 0 0 1.1px rgba(0,0,0,.5);"></div>
<div class="a" style="left:2129.9px;top:1411.6px;width:15.4px;height:53.0px;background:#65636c;box-shadow:inset 0 0 0 1.1px rgba(0,0,0,.5);"></div>
<div class="a" style="left:2145.0px;top:1412.7px;width:2.5px;height:50.8px;background:#403e58;"></div>
<div class="a" style="left:1823.7px;top:1464.4px;width:17.0px;height:53.0px;background:#65636c;box-shadow:inset 0 0 0 1.1px rgba(0,0,0,.5);"></div>
<div class="a" style="left:1856.5px;top:1465.5px;width:3.0px;height:50.8px;background:#3c86c8;"></div>
<div class="a" style="left:1861.7px;top:1464.4px;width:11.0px;height:53.0px;background:#c88fd1;box-shadow:inset 0 0 0 1.1px rgba(0,0,0,.5);"></div>
<div class="a" style="left:2129.9px;top:1464.4px;width:15.4px;height:53.0px;background:#65636c;box-shadow:inset 0 0 0 1.1px rgba(0,0,0,.5);"></div>
<div class="a" style="left:2129.9px;top:1517.2px;width:15.4px;height:53.0px;background:#65636c;box-shadow:inset 0 0 0 1.1px rgba(0,0,0,.5);"></div>
<div class="a" style="left:2129.9px;top:1570.0px;width:15.4px;height:53.0px;background:#65636c;box-shadow:inset 0 0 0 1.1px rgba(0,0,0,.5);"></div>
<div class="a" style="left:2129.9px;top:1622.8px;width:15.4px;height:53.0px;background:#65636c;box-shadow:inset 0 0 0 1.1px rgba(0,0,0,.5);"></div>
<div class="a" style="left:2129.9px;top:1675.6px;width:15.4px;height:53.0px;background:#65636c;box-shadow:inset 0 0 0 1.1px rgba(0,0,0,.5);"></div>
<div class="a" style="left:2129.9px;top:1728.4px;width:15.4px;height:53.0px;background:#65636c;box-shadow:inset 0 0 0 1.1px rgba(0,0,0,.5);"></div>
<div class="a" style="left:2129.9px;top:1781.2px;width:15.4px;height:53.0px;background:#65636c;box-shadow:inset 0 0 0 1.1px rgba(0,0,0,.5);"></div>
<div class="a" style="left:1857.0px;top:1518.3px;width:2.0px;height:103.7px;background:#2f6a9c;"></div>
<div class="a" style="left:1857.0px;top:1622.0px;width:1.5px;height:106.0px;background:#27272c;"></div>
<div class="a" style="left:322.0px;top:1465.5px;width:2.0px;height:34.5px;background:#2a2a2f;"></div>
<div class="a" style="left:873.5px;top:1412.7px;width:1.5px;height:387.3px;background:linear-gradient(#2c2a2a,#33302a 70%,#5a5228 85%,#6a6030);"></div>
<div class="a" style="left:927.3px;top:1412.7px;width:1.6px;height:387.3px;background:#26262a;"></div>
<div class="a" style="left:1354.8px;top:1307.1px;width:1.5px;height:314.9px;background:#3a2730;"></div>
<div class="a" style="left:921.0px;top:1465.5px;width:3.0px;height:134.5px;background:#26262a;"></div>
<div class="a" style="left:2037.0px;top:1307.1px;width:1.5px;height:98.9px;background:#26262a;"></div>
<div class="a" style="left:2050.8px;top:1307.1px;width:2.0px;height:309.9px;background:#2e2e33;"></div>
<div class="a" style="left:2070.5px;top:1254.3px;width:2.5px;height:261.7px;background:#3f3f45;"></div>
<div class="a" style="left:2074.5px;top:1254.3px;width:2.5px;height:367.7px;background:#484c3a;"></div>
<div class="a" style="left:2074.5px;top:1622.0px;width:2.5px;height:178.0px;background:#453c34;"></div>
<div class="a" style="left:2078.3px;top:1254.3px;width:2.2px;height:472.7px;background:#35353a;"></div>
<div class="a" style="left:2145.3px;top:1465.5px;width:5.0px;height:156.5px;background:#3f564d;"></div>
<div class="a" style="left:2145.3px;top:1622.0px;width:4.0px;height:178.0px;background:#373548;"></div>
<div class="a" style="left:2160.6px;top:1254.3px;width:1.6px;height:545.7px;background:#43362b;"></div>
<div class="a" style="left:2163.5px;top:1254.3px;width:2.0px;height:245.7px;background:#2f2f34;"></div>
<div class="a" style="left:2166.0px;top:1254.3px;width:1.6px;height:472.7px;background:#34343a;"></div>
<div class="a" style="left:2769.5px;top:1201.5px;width:2.0px;height:52.5px;background:#2e2e33;"></div>
<div class="a" style="left:2776.8px;top:1201.5px;width:2.6px;height:52.5px;background:#2f4743;"></div>
<div class="a" style="left:2777.3px;top:1254.0px;width:1.5px;height:51.0px;background:#3c3c42;"></div>
<div class="a" style="left:2777.3px;top:1305.0px;width:1.5px;height:207.0px;background:#2a2a2e;"></div>
<div class="a" style="left:2777.2px;top:1512.0px;width:1.6px;height:288.0px;background:linear-gradient(#4a3a24,#8a6628 25%,#96702a);"></div>
<div class="a" style="left:41.7px;top:1490.0px;width:460.3px;height:300.0px;background:#62778f;border-radius:8px;"></div>
<div class="a" style="left:53.0px;top:1501.0px;width:437.5px;height:157.5px;background:#1b1b1e;box-sizing:border-box;border:2px solid #3f85d2;border-bottom-color:#16386a;"></div>
<svg class="a" style="left:0.0px;top:0.0px;pointer-events:none;" width="3706.0" height="1800.0" viewBox="0 0 3706 1800"><rect x="54.5" y="1503.2" width="140.0" height="2.6" fill="#a58ad6"/><rect x="54.5" y="1506.9" width="140.0" height="2.6" fill="#a58ad6"/><rect x="54.5" y="1510.8" width="131.5" height="2.6" fill="#a58ad6"/><rect x="54.5" y="1514.5" width="131.5" height="3.1" fill="#a58ad6"/><rect x="186.6" y="1510.8" width="8.8" height="16.8" fill="#6f6e78"/><rect x="195.6" y="1504.3" width="177.3" height="4.0" fill="#3c7c50"/><rect x="195.6" y="1509.2" width="177.3" height="3.6" fill="#3c7c50"/><rect x="372.9" y="1504.9" width="108.5" height="3.6" fill="#626169"/><rect x="470.3" y="1504.6" width="7.4" height="4.2" fill="#b83060"/><rect x="195.6" y="1514.4" width="67.8" height="2.4" fill="#66656d"/><rect x="319.9" y="1514.4" width="39.1" height="2.4" fill="#66656d"/><rect x="54.5" y="1518.5" width="49.3" height="3.3" fill="#66656d"/><rect x="54.5" y="1522.7" width="42.5" height="5.5" fill="#66656d"/><rect x="97.5" y="1522.7" width="2.0" height="11.3" fill="#55555c"/><rect x="319.9" y="1517.4" width="28.1" height="10.8" fill="#e0407e"/><rect x="319.9" y="1529" width="21.1" height="3.8" fill="#66656d"/><rect x="344" y="1521.8" width="4.0" height="12.2" fill="#c88fd1"/><rect x="339" y="1530" width="2.0" height="8.0" fill="#8a8a92"/><rect x="344.8" y="1534" width="1.2" height="15.0" fill="#4a4a52"/><rect x="186.4" y="1528" width="1.2" height="48.0" fill="#6a6038"/><rect x="186.4" y="1576" width="1.2" height="51.0" fill="#4a4430"/><rect x="195.2" y="1528" width="1.0" height="47.0" fill="#4a4a3a"/><rect x="263" y="1517" width="1.2" height="30.0" fill="#4a4a52"/><rect x="373.5" y="1512" width="1.8" height="18.0" fill="#7a7a82"/><rect x="378.5" y="1509" width="1.9" height="51.0" fill="#8a8a8a"/><rect x="378.8" y="1560" width="1.2" height="28.0" fill="#55555c"/><rect x="388.8" y="1509" width="1.4" height="63.0" fill="#8a8a8a"/><rect x="392" y="1509" width="1.4" height="149.0" fill="#77777a"/><rect x="388.8" y="1572" width="1.4" height="12.0" fill="#5aa098"/><rect x="388.8" y="1584" width="1.4" height="8.0" fill="#8a8a8a"/><rect x="388.6" y="1592" width="3.0" height="7.0" fill="#b88a30"/><rect x="388.8" y="1599" width="1.4" height="59.0" fill="#808084"/></svg>
<div class="a" style="left:389.3px;top:1658.0px;width:3.0px;height:58.0px;background:linear-gradient(#b4cde6,#62778f);"></div>
<div class="a" style="left:51.5px;top:1731.0px;width:50.7px;height:49.4px;background:#413f47;border-radius:6px;"></div>
<svg class="a" style="left:63.0px;top:1743.0px;" width="28.0" height="26.0" viewBox="0 0 28 26"><rect x="1" y="1" width="25" height="23" fill="none" stroke="#c4c4cc" stroke-width="1.6"/><path d="M2 10L9 2M2 18L10 6M3 23L10 12M7 23L10 19" stroke="#9a9aa2" stroke-width="1.4" fill="none"/><path d="M21 7L14 12.5L21 18" stroke="#d4d4da" stroke-width="1.8" fill="none"/></svg>
<div class="a" style="left:2806.0px;top:912.0px;width:882.0px;height:888.0px;background:#1f1f24;"></div>
<div class="a" style="left:3688.0px;top:912.0px;width:18.0px;height:888.0px;background:#1c1c1f;"></div>
<span class="t b" style="left:2838.0px;top:953.1px;font-size:29.65px;color:#e4e4e8;letter-spacing:-0.28px;">Average CPU Time, per minute</span>
<div class="a" style="left:2840.0px;top:1036.0px;width:31.5px;height:31.5px;background:#4b4b53;border-radius:5px;"></div>
<svg class="a" style="left:2840.0px;top:1036.0px;" width="31.5" height="31.5" viewBox="0 0 32 32"><path d="M7 16L13.5 22.5L25 9" fill="none" stroke="#fff" stroke-width="4"/></svg>
<div class="a" style="left:2891.0px;top:1020.8px;width:276.0px;height:60.0px;background:#1b1b1e;border:1.6px solid #66666e;box-sizing:border-box;border-radius:8px;"></div>
<span class="t" style="left:2911.0px;top:1035.4px;font-size:29.65px;color:#e9e9ed;-webkit-text-stroke:0.35px #e9e9ed;letter-spacing:-0.04px;">For Endpoints</span>
<div class="a" style="left:3129px;top:1046px;border-left:10px solid transparent;border-right:10px solid transparent;border-top:11px solid #9a9aa2;"></div>
<div class="a" style="left:3187.0px;top:1020.8px;width:468.0px;height:60.0px;background:#1b1b1e;border:1.6px solid #5c5c64;box-sizing:border-box;border-radius:8px;"></div>
<svg class="a" style="left:3208.0px;top:1036.0px;" width="32.0" height="32.0" viewBox="0 0 32 32"><g fill="none" stroke="#8c8c94" stroke-width="2.4"><circle cx="12.5" cy="12.5" r="10.5"/><path d="M20 20L30 30"/></g></svg>
<span class="t" style="left:3259.0px;top:1036.6px;font-size:29.65px;color:#8a8a92;-webkit-text-stroke:0.35px #8a8a92;letter-spacing:0.09px;">Search endpoints</span>
<div class="a" style="left:2806px;top:1100px;width:883px;height:669px;overflow:hidden;">
<div class="a" style="left:34.0px;top:26.3px;width:31.5px;height:31.4px;background:#3f8bd9;border-radius:5px;"></div>
<svg class="a" style="left:34.0px;top:26.3px;" width="31.5" height="31.5" viewBox="0 0 32 32"><path d="M7 16L13.5 22.5L25 9" fill="none" stroke="#fff" stroke-width="4"/></svg>
<svg class="a" style="left:83px;top:22.5px" width="104" height="40" viewBox="0 0 104 40"><path d="M12 0H101L90 39H12A12 12 0 0 1 0 27V12A12 12 0 0 1 12 0Z" fill="#373d38"/></svg>
<span class="t" style="left:103.7px;top:28.4px;font-size:27.74px;color:#76cc7a;-webkit-text-stroke:0.35px #76cc7a;letter-spacing:-3.31px;">GET</span>
<span class="t" style="left:186.0px;top:27.6px;font-size:29.65px;color:#e2e2e6;-webkit-text-stroke:0.35px #e2e2e6;letter-spacing:1.22px;">/train</span>
<span class="t" style="left:703.4px;top:26.7px;font-size:27.53px;color:#e2e2e6;-webkit-text-stroke:0.35px #e2e2e6;letter-spacing:-0.93px;">14.68s</span>
<div class="a" style="left:800.0px;top:28.0px;width:66.0px;height:26.0px;background:#3a393f;"></div>
<div class="a" style="left:800.0px;top:28.0px;width:58.0px;height:26.0px;background:#69a2d9;"></div>
<div class="a" style="left:34.0px;top:87.8px;width:31.5px;height:31.4px;background:#3f8bd9;border-radius:5px;"></div>
<svg class="a" style="left:34.0px;top:87.8px;" width="31.5" height="31.5" viewBox="0 0 32 32"><path d="M7 16L13.5 22.5L25 9" fill="none" stroke="#fff" stroke-width="4"/></svg>
<svg class="a" style="left:83px;top:84.0px" width="104" height="40" viewBox="0 0 104 40"><path d="M12 0H101L90 39H12A12 12 0 0 1 0 27V12A12 12 0 0 1 12 0Z" fill="#373d38"/></svg>
<span class="t" style="left:103.7px;top:89.9px;font-size:27.74px;color:#76cc7a;-webkit-text-stroke:0.35px #76cc7a;letter-spacing:-3.31px;">GET</span>
<span class="t" style="left:186.0px;top:89.1px;font-size:29.65px;color:#e2e2e6;-webkit-text-stroke:0.35px #e2e2e6;letter-spacing:0.72px;">/correlate</span>
<span class="t" style="left:703.4px;top:88.2px;font-size:27.53px;color:#e2e2e6;-webkit-text-stroke:0.35px #e2e2e6;letter-spacing:-0.93px;">10.65s</span>
<div class="a" style="left:800.0px;top:89.5px;width:66.0px;height:26.0px;background:#3a393f;"></div>
<div class="a" style="left:800.0px;top:89.5px;width:42.0px;height:26.0px;background:#69a2d9;"></div>
<div class="a" style="left:34.0px;top:149.3px;width:31.5px;height:31.4px;background:#3f8bd9;border-radius:5px;"></div>
<svg class="a" style="left:34.0px;top:149.3px;" width="31.5" height="31.5" viewBox="0 0 32 32"><path d="M7 16L13.5 22.5L25 9" fill="none" stroke="#fff" stroke-width="4"/></svg>
<svg class="a" style="left:83px;top:145.5px" width="104" height="40" viewBox="0 0 104 40"><path d="M12 0H101L90 39H12A12 12 0 0 1 0 27V12A12 12 0 0 1 12 0Z" fill="#373d38"/></svg>
<span class="t" style="left:103.7px;top:151.4px;font-size:27.74px;color:#76cc7a;-webkit-text-stroke:0.35px #76cc7a;letter-spacing:-3.31px;">GET</span>
<span class="t" style="left:186.0px;top:150.6px;font-size:29.65px;color:#e2e2e6;-webkit-text-stroke:0.35px #e2e2e6;letter-spacing:0.98px;">/actuator/health</span>
<span class="t" style="left:715.4px;top:149.7px;font-size:27.53px;color:#e2e2e6;-webkit-text-stroke:0.35px #e2e2e6;letter-spacing:-0.43px;">50ms</span>
<div class="a" style="left:800.0px;top:151.0px;width:66.0px;height:26.0px;background:#3a393f;"></div>
<div class="a" style="left:34.0px;top:210.8px;width:31.5px;height:31.4px;background:#3f8bd9;border-radius:5px;"></div>
<svg class="a" style="left:34.0px;top:210.8px;" width="31.5" height="31.5" viewBox="0 0 32 32"><path d="M7 16L13.5 22.5L25 9" fill="none" stroke="#fff" stroke-width="4"/></svg>
<svg class="a" style="left:83px;top:207.0px" width="104" height="40" viewBox="0 0 104 40"><path d="M12 0H101L90 39H12A12 12 0 0 1 0 27V12A12 12 0 0 1 12 0Z" fill="#373d38"/></svg>
<span class="t" style="left:103.7px;top:212.9px;font-size:27.74px;color:#76cc7a;-webkit-text-stroke:0.35px #76cc7a;letter-spacing:-3.31px;">GET</span>
<span class="t" style="left:186.0px;top:212.1px;font-size:29.65px;color:#e2e2e6;-webkit-text-stroke:0.35px #e2e2e6;letter-spacing:0.45px;">/heavy_computation</span>
<span class="t" style="left:730.9px;top:211.2px;font-size:27.53px;color:#e2e2e6;-webkit-text-stroke:0.35px #e2e2e6;letter-spacing:-0.74px;">7ms</span>
<div class="a" style="left:800.0px;top:212.5px;width:66.0px;height:26.0px;background:#3a393f;"></div>
<div class="a" style="left:34.0px;top:272.3px;width:31.5px;height:31.4px;background:#3f8bd9;border-radius:5px;"></div>
<svg class="a" style="left:34.0px;top:272.3px;" width="31.5" height="31.5" viewBox="0 0 32 32"><path d="M7 16L13.5 22.5L25 9" fill="none" stroke="#fff" stroke-width="4"/></svg>
<svg class="a" style="left:83px;top:268.5px" width="104" height="40" viewBox="0 0 104 40"><path d="M12 0H101L90 39H12A12 12 0 0 1 0 27V12A12 12 0 0 1 12 0Z" fill="#373d38"/></svg>
<span class="t" style="left:103.7px;top:274.4px;font-size:27.74px;color:#76cc7a;-webkit-text-stroke:0.35px #76cc7a;letter-spacing:-3.31px;">GET</span>
<span class="t" style="left:186.0px;top:273.6px;font-size:29.65px;color:#e2e2e6;-webkit-text-stroke:0.35px #e2e2e6;letter-spacing:0.47px;">/store_history</span>
<span class="t" style="left:730.9px;top:272.7px;font-size:27.53px;color:#e2e2e6;-webkit-text-stroke:0.35px #e2e2e6;letter-spacing:-0.74px;">6ms</span>
<div class="a" style="left:800.0px;top:274.0px;width:66.0px;height:26.0px;background:#3a393f;"></div>
<div class="a" style="left:34.0px;top:333.8px;width:31.5px;height:31.4px;background:#3f8bd9;border-radius:5px;"></div>
<svg class="a" style="left:34.0px;top:333.8px;" width="31.5" height="31.5" viewBox="0 0 32 32"><path d="M7 16L13.5 22.5L25 9" fill="none" stroke="#fff" stroke-width="4"/></svg>
<span class="t" style="left:89.0px;top:335.1px;font-size:29.65px;color:#e2e2e6;-webkit-text-stroke:0.35px #e2e2e6;letter-spacing:0.19px;">Cron.doWork</span>
<span class="t" style="left:730.9px;top:334.2px;font-size:27.53px;color:#e2e2e6;-webkit-text-stroke:0.35px #e2e2e6;letter-spacing:-0.74px;">6ms</span>
<div class="a" style="left:800.0px;top:335.5px;width:66.0px;height:26.0px;background:#3a393f;"></div>
<div class="a" style="left:34.0px;top:395.3px;width:31.5px;height:31.4px;background:#3f8bd9;border-radius:5px;"></div>
<svg class="a" style="left:34.0px;top:395.3px;" width="31.5" height="31.5" viewBox="0 0 32 32"><path d="M7 16L13.5 22.5L25 9" fill="none" stroke="#fff" stroke-width="4"/></svg>
<svg class="a" style="left:83px;top:391.5px" width="124" height="40" viewBox="0 0 124 40"><path d="M12 0H121L110 39H12A12 12 0 0 1 0 27V12A12 12 0 0 1 12 0Z" fill="#2e3743"/></svg>
<span class="t" style="left:103.7px;top:397.4px;font-size:27.74px;color:#8fc5f5;-webkit-text-stroke:0.35px #8fc5f5;letter-spacing:-2.24px;">POST</span>
<span class="t" style="left:205.0px;top:396.6px;font-size:29.65px;color:#e2e2e6;-webkit-text-stroke:0.35px #e2e2e6;letter-spacing:0.32px;">/row_counts</span>
<span class="t" style="left:730.9px;top:395.7px;font-size:27.53px;color:#e2e2e6;-webkit-text-stroke:0.35px #e2e2e6;letter-spacing:-0.74px;">5ms</span>
<div class="a" style="left:800.0px;top:397.0px;width:66.0px;height:26.0px;background:#3a393f;"></div>
<div class="a" style="left:34.0px;top:456.8px;width:31.5px;height:31.4px;background:#3f8bd9;border-radius:5px;"></div>
<svg class="a" style="left:34.0px;top:456.8px;" width="31.5" height="31.5" viewBox="0 0 32 32"><path d="M7 16L13.5 22.5L25 9" fill="none" stroke="#fff" stroke-width="4"/></svg>
<svg class="a" style="left:83px;top:453.0px" width="104" height="40" viewBox="0 0 104 40"><path d="M12 0H101L90 39H12A12 12 0 0 1 0 27V12A12 12 0 0 1 12 0Z" fill="#373d38"/></svg>
<span class="t" style="left:103.7px;top:458.9px;font-size:27.74px;color:#76cc7a;-webkit-text-stroke:0.35px #76cc7a;letter-spacing:-3.31px;">GET</span>
<span class="t" style="left:186.0px;top:458.1px;font-size:29.65px;color:#e2e2e6;-webkit-text-stroke:0.35px #e2e2e6;letter-spacing:0.22px;">/log_files</span>
<span class="t" style="left:730.9px;top:457.2px;font-size:27.53px;color:#e2e2e6;-webkit-text-stroke:0.35px #e2e2e6;letter-spacing:-0.74px;">4ms</span>
<div class="a" style="left:800.0px;top:458.5px;width:66.0px;height:26.0px;background:#3a393f;"></div>
<div class="a" style="left:34.0px;top:518.3px;width:31.5px;height:31.4px;background:#3f8bd9;border-radius:5px;"></div>
<svg class="a" style="left:34.0px;top:518.3px;" width="31.5" height="31.5" viewBox="0 0 32 32"><path d="M7 16L13.5 22.5L25 9" fill="none" stroke="#fff" stroke-width="4"/></svg>
<svg class="a" style="left:83px;top:514.5px" width="124" height="40" viewBox="0 0 124 40"><path d="M12 0H121L110 39H12A12 12 0 0 1 0 27V12A12 12 0 0 1 12 0Z" fill="#2e3743"/></svg>
<span class="t" style="left:103.7px;top:520.4px;font-size:27.74px;color:#8fc5f5;-webkit-text-stroke:0.35px #8fc5f5;letter-spacing:-2.24px;">POST</span>
<span class="t" style="left:205.0px;top:519.6px;font-size:29.65px;color:#e2e2e6;-webkit-text-stroke:0.35px #e2e2e6;letter-spacing:0.57px;">/update_model</span>
<span class="t" style="left:730.9px;top:518.7px;font-size:27.53px;color:#e2e2e6;-webkit-text-stroke:0.35px #e2e2e6;letter-spacing:-0.74px;">4ms</span>
<div class="a" style="left:800.0px;top:520.0px;width:66.0px;height:26.0px;background:#3a393f;"></div>
<div class="a" style="left:34.0px;top:579.8px;width:31.5px;height:31.4px;background:#3f8bd9;border-radius:5px;"></div>
<svg class="a" style="left:34.0px;top:579.8px;" width="31.5" height="31.5" viewBox="0 0 32 32"><path d="M7 16L13.5 22.5L25 9" fill="none" stroke="#fff" stroke-width="4"/></svg>
<svg class="a" style="left:83px;top:576.0px" width="124" height="40" viewBox="0 0 124 40"><path d="M12 0H121L110 39H12A12 12 0 0 1 0 27V12A12 12 0 0 1 12 0Z" fill="#2e3743"/></svg>
<span class="t" style="left:103.7px;top:581.9px;font-size:27.74px;color:#8fc5f5;-webkit-text-stroke:0.35px #8fc5f5;letter-spacing:-2.24px;">POST</span>
<span class="t" style="left:205.0px;top:581.1px;font-size:29.65px;color:#e2e2e6;-webkit-text-stroke:0.35px #e2e2e6;letter-spacing:0.65px;">/order_amounts</span>
<span class="t" style="left:730.9px;top:580.2px;font-size:27.53px;color:#e2e2e6;-webkit-text-stroke:0.35px #e2e2e6;letter-spacing:-0.74px;">2ms</span>
<div class="a" style="left:800.0px;top:581.5px;width:66.0px;height:26.0px;background:#3a393f;"></div>
<div class="a" style="left:34.0px;top:641.3px;width:31.5px;height:31.4px;background:#3f8bd9;border-radius:5px;"></div>
<svg class="a" style="left:34.0px;top:641.3px;" width="31.5" height="31.5" viewBox="0 0 32 32"><path d="M7 16L13.5 22.5L25 9" fill="none" stroke="#fff" stroke-width="4"/></svg>
<svg class="a" style="left:83px;top:637.5px" width="124" height="40" viewBox="0 0 124 40"><path d="M12 0H121L110 39H12A12 12 0 0 1 0 27V12A12 12 0 0 1 12 0Z" fill="#2e3743"/></svg>
<span class="t" style="left:103.7px;top:643.4px;font-size:27.74px;color:#8fc5f5;-webkit-text-stroke:0.35px #8fc5f5;letter-spacing:-2.24px;">POST</span>
<span class="t" style="left:205.0px;top:642.6px;font-size:29.65px;color:#e2e2e6;-webkit-text-stroke:0.35px #e2e2e6;letter-spacing:-0.08px;">/spend_analysis</span>
<span class="t" style="left:730.9px;top:641.7px;font-size:27.53px;color:#e2e2e6;-webkit-text-stroke:0.35px #e2e2e6;letter-spacing:-0.74px;">2ms</span>
<div class="a" style="left:800.0px;top:643.0px;width:66.0px;height:26.0px;background:#3a393f;"></div>
</div>
<script>(function(){var w=window.innerWidth||0;if(w>50&&Math.abs(w-3706)>2){document.documentElement.style.zoom=(w/3706);}})();</script>
</body></html>
